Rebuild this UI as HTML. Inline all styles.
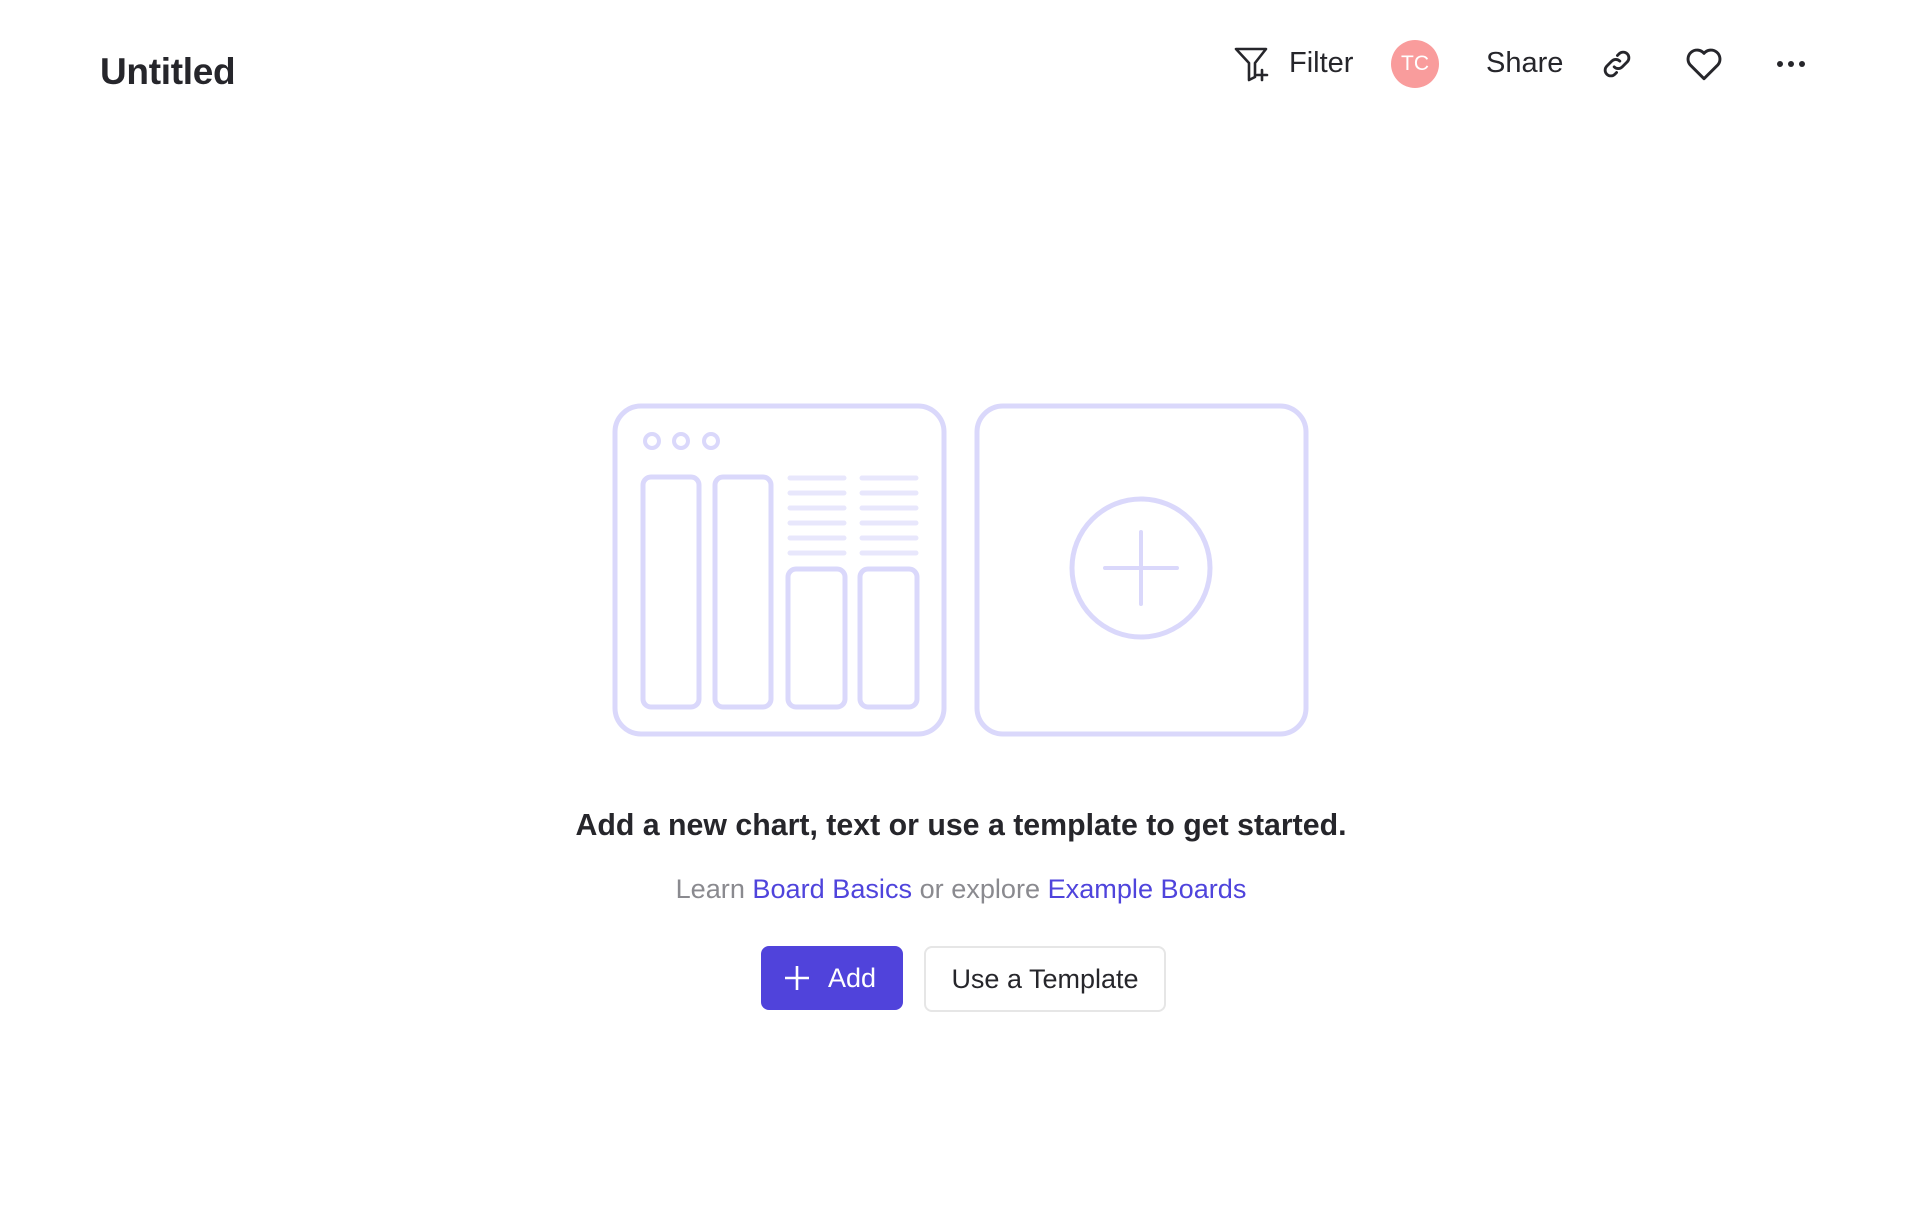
<!DOCTYPE html>
<html><head><meta charset="utf-8"><style>
body{margin:0;width:1912px;height:1208px;background:#fff;font-family:"Liberation Sans",sans-serif;color:#26262b;position:relative;overflow:hidden}
.a{position:absolute;white-space:nowrap}
</style></head><body>
<div class="a" style="left:100px;top:51px;font-size:37px;font-weight:bold;letter-spacing:-0.3px">Untitled</div>
<svg class="a" style="left:1233px;top:46px" width="40" height="38" viewBox="0 0 40 38" fill="none" stroke="#26262b" stroke-width="2.6" stroke-linejoin="round" stroke-linecap="round"><path d="M3 3h30l-11 14v14l-6 3V17z"/><path d="M29 24v10M24 29h10"/></svg>
<div class="a" style="left:1289px;top:47px;font-size:29px">Filter</div>
<div class="a" style="left:1391px;top:40px;width:48px;height:48px;border-radius:50%;background:#f99c9c;color:#fff;font-size:21px;line-height:48px;text-align:center">TC</div>
<div class="a" style="left:1486px;top:47px;font-size:29px">Share</div>
<svg class="a" style="left:1600px;top:47px" width="34" height="34" viewBox="0 0 24 24" fill="none" stroke="#26262b" stroke-width="2" stroke-linecap="round"><path d="M10 14a4 4 0 0 0 5.7 0l3.5-3.5a4 4 0 0 0-5.7-5.7l-1.2 1.2"/><path d="M14 10a4 4 0 0 0-5.7 0l-3.5 3.5a4 4 0 0 0 5.7 5.7l1.2-1.2"/></svg>
<svg class="a" style="left:1684px;top:46px" width="40" height="36" viewBox="0 0 24 22" fill="none" stroke="#26262b" stroke-width="1.8" stroke-linejoin="round"><path d="M12 20L3.5 11.5A5 5 0 0 1 12 4.5a5 5 0 0 1 8.5 7z"/></svg>
<svg class="a" style="left:1775px;top:58px" width="32" height="12"><circle cx="5" cy="6" r="3" fill="#26262b"/><circle cx="16" cy="6" r="3" fill="#26262b"/><circle cx="27" cy="6" r="3" fill="#26262b"/></svg>
<svg class="a" style="left:-5px;top:-3px" width="1912" height="800" fill="none" stroke="#dad8fb" stroke-width="5" stroke-linecap="round">
<rect x="620" y="409" width="329" height="328" rx="26"/>
<rect x="982" y="409" width="329" height="328" rx="26"/>
<circle cx="657" cy="444" r="7" stroke-width="4"/><circle cx="686" cy="444" r="7" stroke-width="4"/><circle cx="716" cy="444" r="7" stroke-width="4"/>
<rect x="648" y="480" width="56" height="230" rx="8"/>
<rect x="720" y="480" width="56" height="230" rx="8"/>
<rect x="793" y="572" width="57" height="138" rx="8"/>
<rect x="865" y="572" width="57" height="138" rx="8"/>
<g stroke="#e8e7fc" stroke-width="5"><path d="M795 481h54M867 481h54M795 496h54M867 496h54M795 511h54M867 511h54M795 526h54M867 526h54M795 541h54M867 541h54M795 556h54M867 556h54"/></g>
<circle cx="1146" cy="571" r="69"/>
<path d="M1146 535v72M1110 571h72" stroke-width="4"/>
</svg>
<div class="a" style="left:0;width:1922px;text-align:center;top:809px;font-size:30.3px;font-weight:bold">Add a new chart, text or use a template to get started.</div>
<div class="a" style="left:0;width:1922px;text-align:center;top:873px;font-size:27.1px;color:#8a8a8f">Learn <span style="color:#4f44dc">Board Basics</span> or explore <span style="color:#4f44dc">Example Boards</span></div>
<div class="a" style="left:761px;top:946px;width:142px;height:64px;border-radius:8px;background:#5043db;color:#fff;font-size:27px;line-height:64px">
<svg class="a" style="left:24px;top:20px" width="24" height="24" stroke="#fff" stroke-width="2.6"><path d="M12 0v24M0 12h24"/></svg><span style="position:absolute;left:67px">Add</span></div>
<div class="a" style="left:924px;top:946px;width:238px;height:62px;border:2px solid #e6e6e6;border-radius:8px;font-size:27px;line-height:62px;text-align:center">Use a Template</div>
</body></html>
